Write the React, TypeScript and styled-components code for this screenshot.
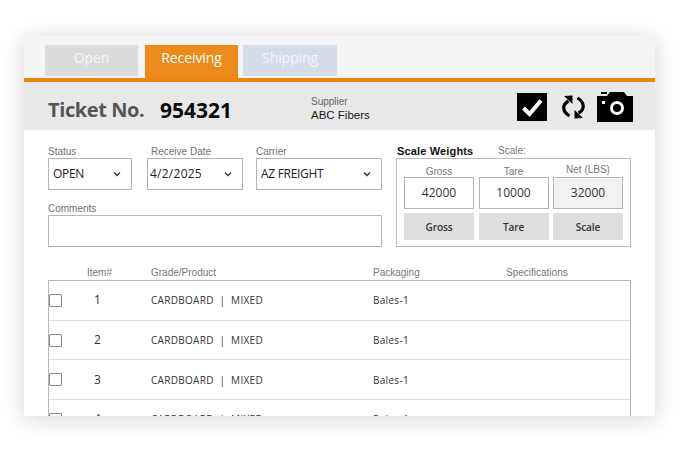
import React from "react";
import styled, { createGlobalStyle } from "styled-components";

const GlobalStyle = createGlobalStyle`
  html, body {
    margin: 0;
    padding: 0;
    background: #fff;
    overflow: hidden;
  }
  * {
    box-sizing: border-box;
  }
`;

const ROWS = [1, 2, 3, 4];

const ChevronIcon = () => (
  <svg width="8" height="6" viewBox="0 0 8 6" fill="none">
    <path d="M1 1.5 L4 4.5 L7 1.5" stroke="#333" strokeWidth="1.3" />
  </svg>
);

const App: React.FC = () => {
  return (
    <Page>
      <GlobalStyle />
      <Card>
        <TabBar>
          <Tab variant="open">Open</Tab>
          <Tab variant="active">Receiving</Tab>
          <Tab variant="shipping">Shipping</Tab>
        </TabBar>
        <TicketBar>
          <TicketLabel>Ticket No.</TicketLabel>
          <TicketNumber>954321</TicketNumber>
          <Supplier>
            <SupplierLabel>Supplier</SupplierLabel>
            <SupplierName>ABC Fibers</SupplierName>
          </Supplier>
          <Actions>
            <svg width="30" height="28" viewBox="0 0 30 28">
              <rect width="30" height="28" fill="#000" />
              <path d="M6.5 15 L12.5 21 L24 7.5" fill="none" stroke="#fff" strokeWidth="4" />
            </svg>
            <svg width="25" height="24" viewBox="0 0 25 24" fill="none">
              <path d="M7.5 6 C1 9.5 1 16.5 8.5 21" stroke="#000" strokeWidth="3.2" />
              <path d="M17.5 18 C24 14.5 24 7.5 16.5 3" stroke="#000" strokeWidth="3.2" />
              <path d="M3 1 L11.5 0.5 L11.5 9 Z" fill="#000" />
              <path d="M22 23 L13.5 23.5 L13.5 15 Z" fill="#000" />
            </svg>
            <svg width="36" height="30" viewBox="0 0 36 30">
              <path d="M0 4 H10 L13 0 H27 L30 4 H36 V30 H0 Z" fill="#000" />
              <rect x="4" y="0" width="6" height="2" fill="#000" />
              <circle cx="20" cy="16" r="5.5" fill="none" stroke="#fff" strokeWidth="3" />
              <rect x="5" y="9" width="3" height="3" fill="#fff" />
            </svg>
          </Actions>
        </TicketBar>
        <FormArea>
          <LeftForm>
            <FieldRow>
              <Field width={84}>
                <FieldLabel>Status</FieldLabel>
                <SelectBox>
                  OPEN
                  <ChevronIcon />
                </SelectBox>
              </Field>
              <Field width={96}>
                <FieldLabel indent={4}>Receive Date</FieldLabel>
                <SelectBox flush>
                  4/2/2025
                  <ChevronIcon />
                </SelectBox>
              </Field>
              <Field width={126}>
                <FieldLabel>Carrier</FieldLabel>
                <SelectBox>
                  AZ FREIGHT
                  <ChevronIcon />
                </SelectBox>
              </Field>
            </FieldRow>
            <CommentsField>
              <FieldLabel>Comments</FieldLabel>
              <CommentsBox />
            </CommentsField>
          </LeftForm>
          <ScalePanel>
            <ScaleHeading>
              <ScaleTitle>Scale Weights</ScaleTitle>
              <ScaleNote>Scale:</ScaleNote>
            </ScaleHeading>
            <ScaleBox>
              <WeightLabel lift={-5}>Gross</WeightLabel>
              <WeightLabel lift={-5}>Tare</WeightLabel>
              <WeightLabel lift={-3}>Net (LBS)</WeightLabel>
              <WeightValue>42000</WeightValue>
              <WeightValue>10000</WeightValue>
              <WeightValue readOnly>32000</WeightValue>
              <WeightButton>Gross</WeightButton>
              <WeightButton>Tare</WeightButton>
              <WeightButton>Scale</WeightButton>
            </ScaleBox>
          </ScalePanel>
        </FormArea>
        <TableArea>
          <HeaderRow>
            <span />
            <HeaderCell>Item#</HeaderCell>
            <HeaderCell>Grade/Product</HeaderCell>
            <HeaderCell>Packaging</HeaderCell>
            <HeaderCell>Specifications</HeaderCell>
          </HeaderRow>
          <ItemTable>
            {ROWS.map((n) => (
              <ItemRow key={n}>
                <RowCheck />
                <ItemNumber>{n}</ItemNumber>
                <ItemText>CARDBOARD&nbsp; |&nbsp; MIXED</ItemText>
                <ItemText>Bales-1</ItemText>
                <span />
              </ItemRow>
            ))}
          </ItemTable>
        </TableArea>
      </Card>
    </Page>
  );
};

const Page = styled.div`
  width: 680px;
  height: 453px;
  padding: 36px 25px 37px 24px;
  background: #fff;
`;

const Card = styled.div`
  width: 631px;
  height: 380px;
  background: #fff;
  overflow: hidden;
  box-shadow: 0 3px 22px rgba(0, 0, 0, 0.17);
`;

const TabBar = styled.div`
  display: flex;
  align-items: flex-start;
  height: 46px;
  padding: 9px 0 0 21px;
  background: #f5f5f5;
  border-bottom: 4px solid #ee8412;
`;

const tabColors = {
  open: "#dcdcdc",
  active: "#ec8a1c",
  shipping: "#d5ddeb",
};

const Tab = styled.div<{ variant: keyof typeof tabColors }>`
  width: ${(p) => (p.variant === "shipping" ? 94 : 93)}px;
  height: ${(p) => (p.variant === "active" ? 33 : 31)}px;
  margin-right: ${(p) => (p.variant === "open" ? 7 : 5)}px;
  padding-top: 3px;
  text-align: center;
  background: ${(p) => tabColors[p.variant]};
  color: ${(p) => (p.variant === "active" ? "#fff" : "#f4f6f8")};
  font: 14px/19px "Open Sans", sans-serif;
  letter-spacing: -0.1px;
`;

const TicketBar = styled.div`
  display: flex;
  align-items: center;
  height: 48px;
  padding: 0 22px 0 24px;
  background: #e8e8e8;
`;

const TicketLabel = styled.div`
  width: 112px;
  margin-top: 7px;
  font: 700 20px/28px "Open Sans", sans-serif;
  letter-spacing: -0.4px;
  color: #555;
  white-space: nowrap;
`;

const TicketNumber = styled.div`
  width: 151px;
  margin-top: 7px;
  font: 700 21px/28px "Open Sans", sans-serif;
  color: #0a0a0a;
`;

const Supplier = styled.div`
  display: flex;
  flex-direction: column;
  margin-top: 6px;
`;

const SupplierLabel = styled.span`
  font: 10px/13px "Liberation Sans", Arial, sans-serif;
  color: #666;
`;

const SupplierName = styled.span`
  font: 11.5px/15px "Liberation Sans", Arial, sans-serif;
  color: #1a1a1a;
`;

const Actions = styled.div`
  display: flex;
  align-items: center;
  gap: 14px;
  margin-left: auto;
  margin-top: 2px;

  svg:nth-child(2) {
    margin-right: -3px;
  }
`;

const FormArea = styled.div`
  display: flex;
  align-items: flex-start;
  gap: 14px;
  height: 136px;
  padding: 15px 24px 0;
`;

const LeftForm = styled.div`
  display: flex;
  flex-direction: column;
  width: 334px;
`;

const FieldRow = styled.div`
  display: flex;
  gap: 13px;

  > div:first-child {
    margin-right: 2px;
  }
`;

const Field = styled.div<{ width: number }>`
  width: ${(p) => p.width}px;
`;

const FieldLabel = styled.div<{ indent?: number }>`
  padding-left: ${(p) => p.indent ?? 0}px;
  font: 10px/13px "Liberation Sans", Arial, sans-serif;
  color: #707070;
`;

const SelectBox = styled.div<{ flush?: boolean }>`
  display: flex;
  align-items: center;
  justify-content: space-between;
  height: 32px;
  padding: 0 10px 0 ${(p) => (p.flush ? 2 : 4)}px;
  border: 1px solid #b5b5b5;
  background: #fff;
  font: 12px/16px "Open Sans", sans-serif;
  letter-spacing: ${(p) => (p.flush ? 0.25 : -0.3)}px;
  color: #222;
`;

const CommentsField = styled.div`
  margin-top: 12px;
`;

const CommentsBox = styled.div`
  height: 32px;
  border: 1px solid #b5b5b5;
`;

const ScalePanel = styled.div`
  width: 235px;
  margin: -1px 0 0 0;
`;

const ScaleHeading = styled.div`
  display: flex;
  align-items: center;
  height: 14px;
`;

const ScaleTitle = styled.span`
  width: 102px;
  padding-left: 1px;
  font: 700 11px/13px "Liberation Sans", Arial, sans-serif;
  letter-spacing: 0.15px;
  color: #111;
`;

const ScaleNote = styled.span`
  margin-top: -2px;
  font: 10px/13px "Liberation Sans", Arial, sans-serif;
  color: #777;
`;

const ScaleBox = styled.div`
  display: grid;
  grid-template-columns: repeat(3, 70px);
  grid-template-rows: 14px 32px 27px;
  column-gap: 4.5px;
  row-gap: 4px;
  height: 89px;
  padding-left: 7px;
  border: 1px solid #bdbdbd;
`;

const WeightLabel = styled.div<{ lift: number }>`
  align-self: end;
  margin-bottom: ${(p) => p.lift}px;
  text-align: center;
  font: 10px/13px "Liberation Sans", Arial, sans-serif;
  color: #777;
`;

const WeightValue = styled.div<{ readOnly?: boolean }>`
  display: flex;
  align-items: center;
  justify-content: center;
  border: 1px solid #b5b5b5;
  background: ${(p) => (p.readOnly ? "#f2f2f2" : "#fff")};
  font: 12px/16px "Open Sans", sans-serif;
  color: #333;
`;

const WeightButton = styled.div`
  display: flex;
  align-items: center;
  justify-content: center;
  background: #dedede;
  font: 600 10px/14px "Open Sans", sans-serif;
  letter-spacing: -0.1px;
  color: #333;
`;

const TableArea = styled.div`
  padding: 0 24px;
`;

const HeaderRow = styled.div`
  display: grid;
  grid-template-columns: 39px 64px 222px 133px 1fr;
  height: 14px;
`;

const HeaderCell = styled.div`
  font: 10px/13px "Liberation Sans", Arial, sans-serif;
  color: #777;
  white-space: nowrap;
`;

const ItemTable = styled.div`
  width: 583px;
  height: 160px;
  overflow: hidden;
  border: 1px solid #b5b5b5;
  border-bottom: 0;
`;

const ItemRow = styled.div`
  display: grid;
  grid-template-columns: 38px 64px 222px 133px 1fr;
  align-items: center;
  height: 39.7px;
  border-bottom: 1px solid #dedede;
`;

const RowCheck = styled.div`
  width: 13px;
  height: 13px;
  border: 1px solid #8a8a8a;
  border-radius: 1px;
`;

const ItemNumber = styled.div`
  padding-left: 7px;
  font: 12px/16px "Open Sans", sans-serif;
  color: #333;
`;

const ItemText = styled.div`
  font: 10px/14px "Open Sans", sans-serif;
  letter-spacing: 0.3px;
  color: #333;
  white-space: nowrap;
`;

export default App;
